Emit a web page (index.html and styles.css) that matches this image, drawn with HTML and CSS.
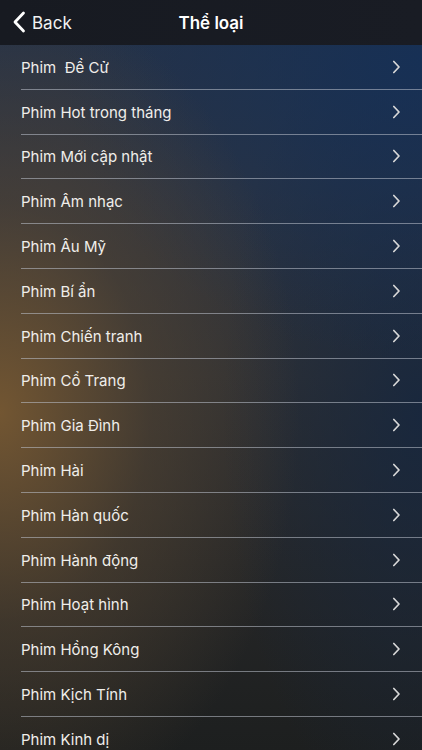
FILE: index.html
```html
<!DOCTYPE html>
<html lang="vi">
<head>
<meta charset="utf-8">
<link rel="stylesheet" href="styles.css">
</head>
<body>
<div class="screen">
  <header class="navbar">
    <div class="back">
      <svg class="back-icon" width="14" height="22" viewBox="0 0 14 22"><path d="M11.5 2 L3 11 L11.5 20" fill="none" stroke="#fff" stroke-width="2.8" stroke-linecap="round" stroke-linejoin="round"/></svg>
      <span>Back</span>
    </div>
    <div class="title">Thể loại</div>
  </header>
  <ul class="list">
    <li class="row"><div class="cell"><span>Phim&nbsp; Đề Cử</span><svg class="chev" width="9" height="14" viewBox="0 0 9 14"><path d="M1.8 1.5 L7 7 L1.8 12.5" fill="none" stroke="#d8d8d8" stroke-width="1.7" stroke-linecap="round" stroke-linejoin="round"/></svg></div></li>
    <li class="row"><div class="cell"><span>Phim Hot trong tháng</span><svg class="chev" width="9" height="14" viewBox="0 0 9 14"><path d="M1.8 1.5 L7 7 L1.8 12.5" fill="none" stroke="#d8d8d8" stroke-width="1.7" stroke-linecap="round" stroke-linejoin="round"/></svg></div></li>
    <li class="row"><div class="cell"><span>Phim Mới cập nhật</span><svg class="chev" width="9" height="14" viewBox="0 0 9 14"><path d="M1.8 1.5 L7 7 L1.8 12.5" fill="none" stroke="#d8d8d8" stroke-width="1.7" stroke-linecap="round" stroke-linejoin="round"/></svg></div></li>
    <li class="row"><div class="cell"><span>Phim Âm nhạc</span><svg class="chev" width="9" height="14" viewBox="0 0 9 14"><path d="M1.8 1.5 L7 7 L1.8 12.5" fill="none" stroke="#d8d8d8" stroke-width="1.7" stroke-linecap="round" stroke-linejoin="round"/></svg></div></li>
    <li class="row"><div class="cell"><span>Phim Âu Mỹ</span><svg class="chev" width="9" height="14" viewBox="0 0 9 14"><path d="M1.8 1.5 L7 7 L1.8 12.5" fill="none" stroke="#d8d8d8" stroke-width="1.7" stroke-linecap="round" stroke-linejoin="round"/></svg></div></li>
    <li class="row"><div class="cell"><span>Phim Bí ẩn</span><svg class="chev" width="9" height="14" viewBox="0 0 9 14"><path d="M1.8 1.5 L7 7 L1.8 12.5" fill="none" stroke="#d8d8d8" stroke-width="1.7" stroke-linecap="round" stroke-linejoin="round"/></svg></div></li>
    <li class="row"><div class="cell"><span>Phim Chiến tranh</span><svg class="chev" width="9" height="14" viewBox="0 0 9 14"><path d="M1.8 1.5 L7 7 L1.8 12.5" fill="none" stroke="#d8d8d8" stroke-width="1.7" stroke-linecap="round" stroke-linejoin="round"/></svg></div></li>
    <li class="row"><div class="cell"><span>Phim Cổ Trang</span><svg class="chev" width="9" height="14" viewBox="0 0 9 14"><path d="M1.8 1.5 L7 7 L1.8 12.5" fill="none" stroke="#d8d8d8" stroke-width="1.7" stroke-linecap="round" stroke-linejoin="round"/></svg></div></li>
    <li class="row"><div class="cell"><span>Phim Gia Đình</span><svg class="chev" width="9" height="14" viewBox="0 0 9 14"><path d="M1.8 1.5 L7 7 L1.8 12.5" fill="none" stroke="#d8d8d8" stroke-width="1.7" stroke-linecap="round" stroke-linejoin="round"/></svg></div></li>
    <li class="row"><div class="cell"><span>Phim Hài</span><svg class="chev" width="9" height="14" viewBox="0 0 9 14"><path d="M1.8 1.5 L7 7 L1.8 12.5" fill="none" stroke="#d8d8d8" stroke-width="1.7" stroke-linecap="round" stroke-linejoin="round"/></svg></div></li>
    <li class="row"><div class="cell"><span>Phim Hàn quốc</span><svg class="chev" width="9" height="14" viewBox="0 0 9 14"><path d="M1.8 1.5 L7 7 L1.8 12.5" fill="none" stroke="#d8d8d8" stroke-width="1.7" stroke-linecap="round" stroke-linejoin="round"/></svg></div></li>
    <li class="row"><div class="cell"><span>Phim Hành động</span><svg class="chev" width="9" height="14" viewBox="0 0 9 14"><path d="M1.8 1.5 L7 7 L1.8 12.5" fill="none" stroke="#d8d8d8" stroke-width="1.7" stroke-linecap="round" stroke-linejoin="round"/></svg></div></li>
    <li class="row"><div class="cell"><span>Phim Hoạt hình</span><svg class="chev" width="9" height="14" viewBox="0 0 9 14"><path d="M1.8 1.5 L7 7 L1.8 12.5" fill="none" stroke="#d8d8d8" stroke-width="1.7" stroke-linecap="round" stroke-linejoin="round"/></svg></div></li>
    <li class="row"><div class="cell"><span>Phim Hồng Kông</span><svg class="chev" width="9" height="14" viewBox="0 0 9 14"><path d="M1.8 1.5 L7 7 L1.8 12.5" fill="none" stroke="#d8d8d8" stroke-width="1.7" stroke-linecap="round" stroke-linejoin="round"/></svg></div></li>
    <li class="row"><div class="cell"><span>Phim Kịch Tính</span><svg class="chev" width="9" height="14" viewBox="0 0 9 14"><path d="M1.8 1.5 L7 7 L1.8 12.5" fill="none" stroke="#d8d8d8" stroke-width="1.7" stroke-linecap="round" stroke-linejoin="round"/></svg></div></li>
    <li class="row"><div class="cell"><span>Phim Kinh dị</span><svg class="chev" width="9" height="14" viewBox="0 0 9 14"><path d="M1.8 1.5 L7 7 L1.8 12.5" fill="none" stroke="#d8d8d8" stroke-width="1.7" stroke-linecap="round" stroke-linejoin="round"/></svg></div></li>
  </ul>
</div>
</body>
</html>
```
FILE: styles.css
```css
* { box-sizing: border-box; }
html, body {
  margin: 0;
  padding: 0;
  width: 422px;
  height: 750px;
  overflow: hidden;
  background: #1c1e22;
}
.screen {
  width: 422px;
  height: 750px;
  overflow: hidden;
  font-family: "Inter", "Liberation Sans", sans-serif;
  color: #f0eeea;
  background:
    radial-gradient(ellipse 300px 420px at 0% 55%, rgba(118, 88, 50, 0.95), rgba(90, 72, 50, 0.5) 50%, rgba(60, 52, 44, 0) 100%),
    radial-gradient(ellipse 360px 300px at 100% 8%, rgba(22, 48, 86, 0.95), rgba(22, 48, 86, 0) 100%),
    radial-gradient(ellipse 200px 420px at 100% 55%, rgba(20, 38, 64, 0.8), rgba(20, 38, 64, 0) 100%),
    linear-gradient(to bottom, #23324a 0%, #2c3340 25%, #2e3034 50%, #262728 75%, #1d1f1f 100%);
}
.navbar {
  height: 45px;
  display: flex;
  align-items: center;
  justify-content: center;
  position: relative;
  background: linear-gradient(to right, #171a21, #191c24);
}
.back {
  position: absolute;
  left: 12px;
  top: 0;
  height: 45px;
  display: flex;
  align-items: center;
  gap: 6px;
  font-size: 17px;
  color: #f2f2f2;
}
.back-icon { display: block; margin-top: -1px; }
.title {
  font-size: 17px;
  font-weight: 600;
  color: #fff;
}
.list {
  list-style: none;
  margin: 0;
  padding: 0;
}
.row {
  height: 44.8px;
  padding-left: 21px;
}
.cell {
  height: 100%;
  display: flex;
  align-items: center;
  justify-content: space-between;
  padding-right: 21px;
  border-bottom: 1px solid rgba(190, 195, 205, 0.55);
  font-size: 15px;
}
.cell span { padding-top: 1px; }
.chev { display: block; }
```
